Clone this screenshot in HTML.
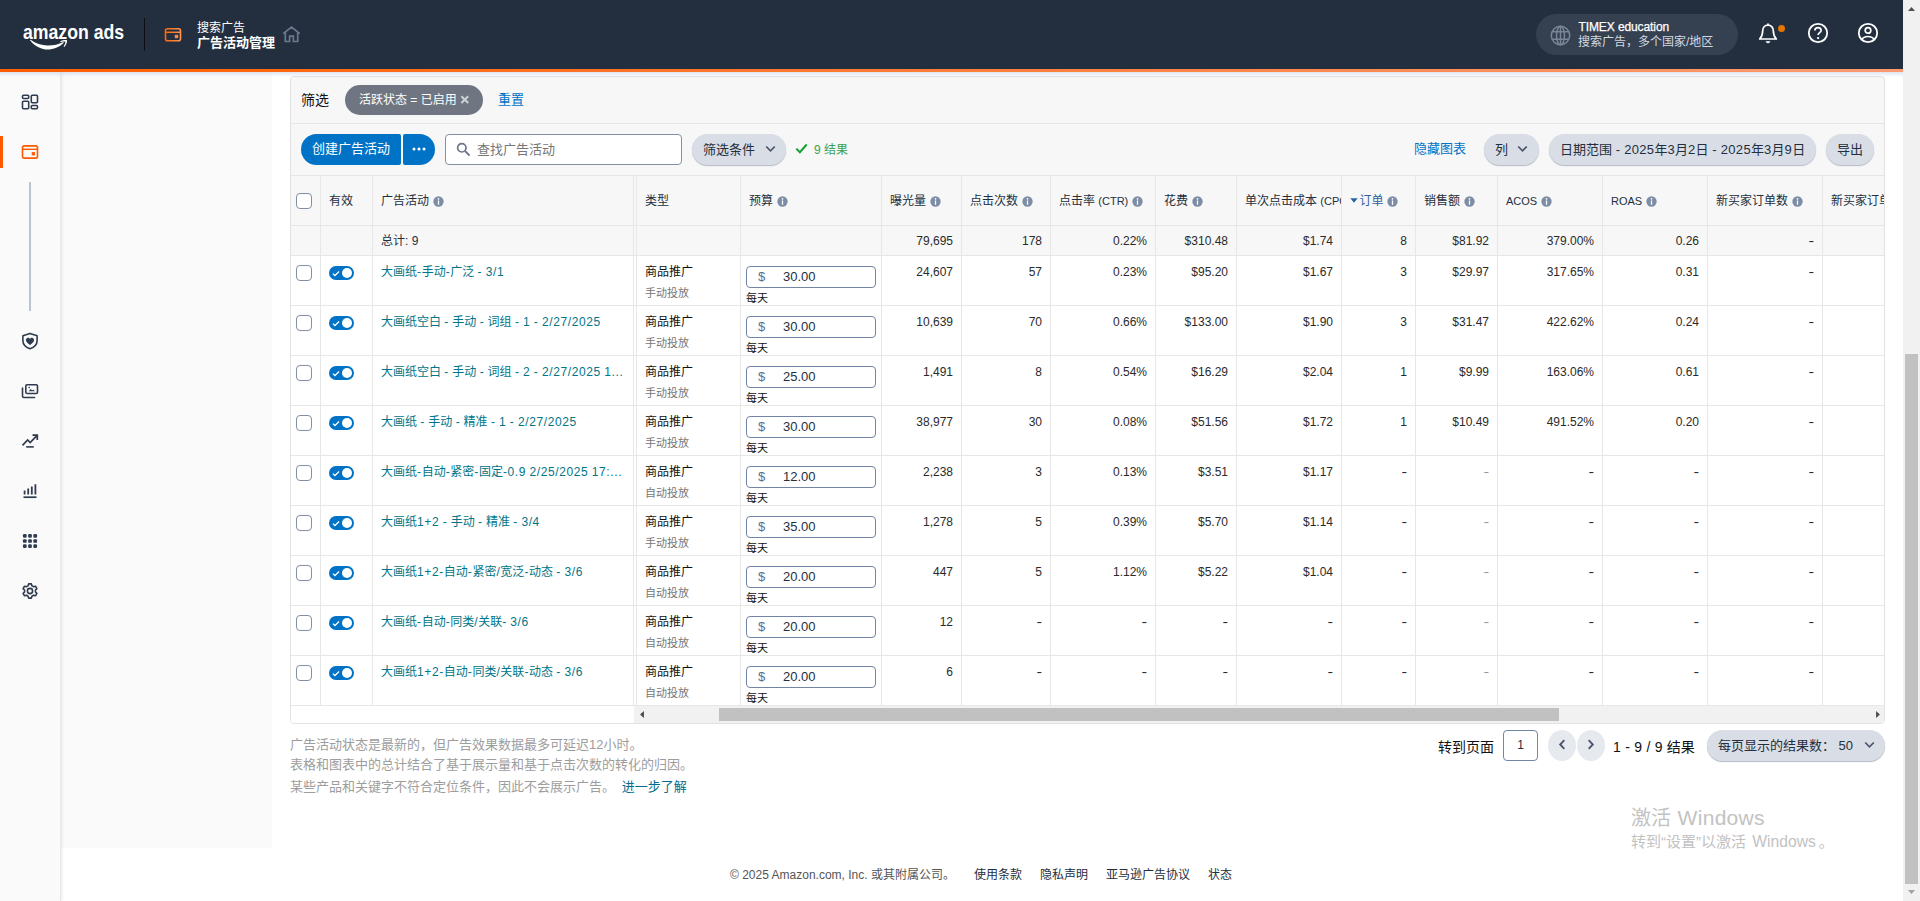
<!DOCTYPE html>
<html lang="zh-CN"><head><meta charset="utf-8"><title>广告活动管理</title>
<style>
*{box-sizing:border-box}
html,body{margin:0;padding:0}
body{width:1920px;height:901px;overflow:hidden;background:#fff;position:relative;
 font-family:"Liberation Sans","Noto Sans CJK SC",sans-serif;font-size:12px;color:#232f3e;line-height:16px}
a{text-decoration:none;color:inherit}
.abs{position:absolute}
svg{display:block}

/* ---------- header ---------- */
#hdr{position:absolute;left:0;top:0;width:1903px;height:72px;background:#232f3e}
#oline{position:absolute;left:0;top:69px;width:1903px;height:3px;background:linear-gradient(90deg,#ff5f00,#ff9b70)}
#hshadow{position:absolute;left:0;top:72px;width:1903px;height:5px;background:linear-gradient(rgba(190,205,222,.5),rgba(190,205,222,0));z-index:5}
#logo{position:absolute;left:22.500px;top:19px;color:#fff;font-weight:bold;font-size:20.500px;line-height:26px;white-space:nowrap;transform:scaleX(.862);transform-origin:0 0;letter-spacing:0}
#smile{position:absolute;left:24px;top:34px}
#hdiv{position:absolute;left:144px;top:18px;width:1px;height:33px;background:#0b0f14}
#hicon{position:absolute;left:164px;top:27px}
#ht1{position:absolute;left:197px;top:20px;color:#fff;font-size:12px;line-height:16px;white-space:nowrap}
#ht2{position:absolute;left:197px;top:35px;color:#fff;font-size:13px;line-height:16px;font-weight:bold;white-space:nowrap}
#home{position:absolute;left:282px;top:25px}
#acct{position:absolute;left:1536px;top:14px;width:202px;height:41px;border-radius:21px;background:#354050}
#globe{position:absolute;left:14.300px;top:10.500px}
#ac1{position:absolute;left:42.500px;top:5px;color:#fff;-webkit-text-stroke:.25px #fff;letter-spacing:-.1px;font-size:12px;line-height:16px;white-space:nowrap}
#ac2{position:absolute;left:42px;top:20px;color:#d3d9e1;font-size:12px;line-height:16px;white-space:nowrap}
#bell{position:absolute;left:1757px;top:23px}
#dot{position:absolute;left:1778px;top:25px;width:7px;height:7px;border-radius:50%;background:#e77600}
#help{position:absolute;left:1807px;top:22px}
#user{position:absolute;left:1857px;top:22px}

/* ---------- page scrollbar ---------- */
#vs{position:absolute;left:1903px;top:0;width:17px;height:901px;background:#f1f1f1}
#vs .thumb{position:absolute;left:2px;top:354px;width:13px;height:530px;background:#c1c1c1}
#vs svg{position:absolute;left:4px}

/* ---------- sidebar ---------- */
#side{position:absolute;left:0;top:72px;width:61px;height:829px;background:#fafafa;border-right:1px solid #e9e9e9;box-shadow:1px 0 3px rgba(0,0,0,.09);z-index:2}
#side .act{position:absolute;left:0;top:64px;width:3px;height:32px;background:#ff5a00}
#side .ln{position:absolute;left:29px;top:110px;width:1.500px;height:129px;background:#bcc4d4}
#side svg{position:absolute;left:21px}
#sub{position:absolute;left:61px;top:72px;width:211px;height:776px;background:#fafafa}

/* ---------- panel ---------- */
#panel{position:absolute;left:290px;top:76px;width:1595px;height:648px;border:1px solid #e2e2e2;border-radius:4px;background:#f7f7f7;overflow:hidden}
#frow{position:absolute;left:0;top:0;width:100%;height:47px;border-bottom:1px solid #e7e7e7}
#trow{position:absolute;left:0;top:47px;width:100%;height:52px;border-bottom:1px solid #e7e7e7}
.pill{position:absolute;height:31px;border-radius:16px;background:#d9dde6;box-shadow:0 1px 1px #b4bac6;color:#232f3e;font-size:13px;line-height:31px;white-space:nowrap}
.chev{position:absolute}
.ls{letter-spacing:.32px}

/* ---------- table ---------- */
#tbl{position:absolute;left:0;top:99px;width:1593px;height:547px;background:#fff}
.thead{position:absolute;left:0;top:0;width:100%;height:50px;border-bottom:1px solid #e7e7e7;background:#f7f7f7}
.th{position:absolute;top:0;height:49px;overflow:hidden;white-space:nowrap;padding-left:9px;line-height:50px;color:#232f3e}
.th .l{font-size:11px}
.th .tx{display:inline-block;vertical-align:top}
.th.sorted .tx{color:#2a62a0}
.info{display:inline-block;width:11px;height:11px;vertical-align:top;margin:19.5px 0 0 4px}
.sort{display:inline-block;width:8px;height:5px;vertical-align:top;margin:21.500px 1.700px 0 -.300px}
.tr{position:absolute;left:0;width:100%;height:50px;border-bottom:1px solid #e7e7e7;background:#fff}
.tr.tot{background:#f7f7f7}
.td{position:absolute;top:0;height:49px;white-space:nowrap;overflow:hidden}
.tot .td{height:29px}
.t1{position:absolute;left:9px;color:#232f3e}
.n{position:absolute;right:8px;top:8px;color:#2a2a2a}
.n.d{transform:scaleX(1.400);transform-origin:100% 50%}
.n.g{color:#9a9a9a}
.cb{position:absolute;width:16px;height:16px;border:1px solid #8290a4;border-radius:4px;background:#fff}
.tg{position:absolute;left:9px;top:10px;width:25px;height:14px;border-radius:7px;background:#0073c7}
.tg i{position:absolute;left:13px;top:2px;width:10px;height:10px;border-radius:50%;background:#fff}
.tg svg{position:absolute;left:3px;top:3.500px;width:8px;height:7px}
.lk{position:absolute;left:9px;top:8px;color:#007587}
.lk .l{letter-spacing:.6px;word-spacing:-.4px}
.ty1{position:absolute;left:9px;top:8px;color:#111}
.ty2{position:absolute;left:9px;top:29px;color:#767676;font-size:11px;line-height:16px}
.bud{position:absolute;left:6px;top:10px;width:130px;height:22px;border:1px solid #7385a4;border-radius:4px;background:#fff}
.bud b{position:absolute;left:11px;top:2px;font-weight:normal;color:#5c6f8f;font-size:13px}
.bud em{position:absolute;left:36px;top:2px;font-style:normal;font-size:13px;color:#232f3e}
.day{position:absolute;left:6px;top:34px;font-size:11px;color:#111}
.vl{position:absolute;top:0;width:1px;height:529px;background:#e7e7e7}
#hs{position:absolute;left:343px;top:530px;width:1250px;height:17px;background:#f1f1f1}
#hs .thumb{position:absolute;left:85px;top:2px;width:840px;height:13px;background:#c1c1c1}
#hs svg{position:absolute;top:5px;width:4px;height:7px}
#hs .al{left:6px}
#hs .ar{right:4px}

/* ---------- bottom ---------- */
.note{position:absolute;left:290px;color:#9d9d9d;font-size:13px;line-height:18px;white-space:nowrap}
.pg{position:absolute;font-size:14px;line-height:18px;color:#111;white-space:nowrap}
.circ{position:absolute;top:730px;width:28px;height:31px;border-radius:50%;background:#e6e9ee}
.wm1{position:absolute;left:1631px;top:804px;font-size:20px;line-height:28px;color:#c2c2c2;white-space:nowrap}
.wm2{position:absolute;left:1631px;top:831px;font-size:15px;line-height:22px;color:#c2c2c2;white-space:nowrap}
.ft{position:absolute;top:867px;font-size:12px;line-height:16px;color:#232f3e;white-space:nowrap}

</style></head>
<body>
<div id="hdr">
<div id="logo">amazon ads</div>
<svg id="smile" width="50" height="20" viewBox="24 34 50 20"><path d="M30 40.2C35 46.600 42 49.600 47.500 49.600c6 0 12-2.500 16.300-6.800l-.7-.7c-4.500 2.500-10 3.600-15.600 3.500-6-.1-12-2.100-16.900-5.800z" fill="#fff"/><path d="M60.200 41.300c2.300-1.100 5.300-1.500 6.800-1 .6 1.700-1 5-2.700 6.600l-.7-.4c1.200-1.700 2.100-3.900 1.700-4.700-1-.6-3.300-.3-4.800.2z" fill="#fff"/></svg>
<div id="hdiv"></div>
<svg id="hicon" width="18" height="15" viewBox="0 0 18 15"><defs><linearGradient id="og" gradientUnits="userSpaceOnUse" x1="0" x2="18" y1="0" y2="0"><stop offset="0" stop-color="#ff6200"/><stop offset="1" stop-color="#ff9a5c"/></linearGradient></defs><rect x="1.500" y="1.800" width="15" height="11.900" rx="2" fill="none" stroke="url(#og)" stroke-width="1.600"/><path d="M1.500 5.300h15" stroke="url(#og)" stroke-width="1.500"/><rect x="10.800" y="7.800" width="3.400" height="3.400" fill="#ff8a45"/></svg>
<div id="ht1">搜索广告</div>
<div id="ht2">广告活动管理</div>
<svg id="home" width="19" height="18" viewBox="0 0 19 18"><path d="M1.200 8.600L9.500 2l8.300 6.600M3.300 7.400v9.100h4.300v-5.300h3.800v5.300h4.300V7.400" fill="none" stroke="#6b788e" stroke-width="1.700" stroke-linejoin="miter"/></svg>
<div id="acct">
<svg id="globe" width="21" height="21" viewBox="0 0 21 21"><g fill="none" stroke="#7a8597" stroke-width="1.500"><circle cx="10.500" cy="10.500" r="9.200"/><ellipse cx="10.500" cy="10.500" rx="4" ry="9.200"/><path d="M10.500 1.300v18.400M2.300 6.700h16.400M2.300 14.300h16.400"/></g></svg>
<div id="ac1">TIMEX education</div>
<div id="ac2">搜索广告，多个国家/地区</div>
</div>
<svg id="bell" width="22" height="22" viewBox="0 0 22 22"><path d="M11 2.200c-3.300 0-5.300 2.500-5.300 5.600 0 4.500-1.300 6.300-3 8.200h16.600c-1.700-1.900-3-3.700-3-8.200 0-3.100-2-5.600-5.300-5.600zM11 2.200V1" fill="none" stroke="#fff" stroke-width="1.700" stroke-linejoin="round" stroke-linecap="round"/><path d="M8.600 18.300c.4 1.300 1.300 2 2.400 2s2-.7 2.400-2z" fill="#fff"/></svg>
<div id="dot"></div>
<svg id="help" width="22" height="22" viewBox="0 0 22 22"><circle cx="11" cy="11" r="9.200" fill="none" stroke="#fff" stroke-width="1.800"/><path d="M7.900 8.600c0-1.800 1.300-2.900 3.100-2.900s3.100 1.100 3.100 2.700c0 2.200-3 2.300-3 4.700" fill="none" stroke="#fff" stroke-width="1.700"/><circle cx="11.100" cy="16.100" r="1.150" fill="#fff"/></svg>
<svg id="user" width="22" height="22" viewBox="0 0 22 22"><circle cx="11" cy="11" r="9.200" fill="none" stroke="#fff" stroke-width="1.800"/><circle cx="11" cy="8.400" r="2.800" fill="none" stroke="#fff" stroke-width="1.700"/><path d="M4.800 17.800c1.200-2.300 3.500-3.300 6.200-3.300s5 1 6.200 3.300" fill="none" stroke="#fff" stroke-width="1.700"/></svg>
</div>
<div id="oline"></div>
<div id="hshadow"></div>
<div id="vs"><svg style="top:7px;left:5px" width="7" height="4" viewBox="0 0 7 4"><path d="M0 4h7L3.500 0z" fill="#505050"/></svg><div class="thumb"></div><svg style="top:890px;left:5px" width="7" height="4" viewBox="0 0 7 4"><path d="M0 0h7L3.500 4z" fill="#a3a3a3"/></svg></div>
<div id="sub"></div>
<div id="side">
<div class="act"></div>
<div class="ln"></div>
<svg style="top:21px" width="18" height="18" viewBox="0 0 18 18"><g fill="none" stroke="#2f3b4e" stroke-width="1.600"><rect x="1.500" y="2.200" width="6.200" height="3.300" rx="1"/><rect x="10.300" y="2.200" width="6.200" height="7.600" rx="1"/><rect x="1.500" y="8.200" width="6.200" height="7.600" rx="1"/><rect x="10.300" y="12.500" width="6.200" height="3.300" rx="1"/></g></svg>
<svg style="top:71px" width="18" height="18" viewBox="0 0 18 18"><rect x="1.500" y="2.900" width="15" height="12.200" rx="1.800" fill="none" stroke="#ff5a00" stroke-width="1.600"/><path d="M1.500 6.300h15" stroke="#ff5a00" stroke-width="1.400"/><rect x="10.700" y="9.100" width="3.300" height="3.300" fill="#ff5a00"/></svg>
<svg style="top:260px" width="18" height="18" viewBox="0 0 18 18"><path d="M9 1.400l7.100 2.400v5c0 3.800-3 6.500-7.100 8-4.100-1.500-7.100-4.200-7.100-8v-5z" fill="none" stroke="#2f3b4e" stroke-width="1.600" stroke-linejoin="round"/><path d="M9 13C6.600 11.200 4.900 9.900 4.900 8.100c0-1.300 1-2.300 2.200-2.300.8 0 1.500.5 1.900 1.100.4-.6 1.100-1.100 1.900-1.100 1.200 0 2.200 1 2.200 2.300 0 1.800-1.700 3.100-4.100 4.900z" fill="#2f3b4e"/></svg>
<svg style="top:310px" width="18" height="18" viewBox="0 0 18 18"><rect x="4.800" y="2.700" width="11.700" height="8.800" rx="1.300" fill="none" stroke="#2f3b4e" stroke-width="1.600"/><path d="M1.500 6v8.100c0 .8.600 1.400 1.400 1.400h10.600" fill="none" stroke="#2f3b4e" stroke-width="1.600" stroke-linecap="round"/><path d="M7.600 9.300l2.200-2.300 1.500 1.500.9-.9 1.700 1.700z" fill="#2f3b4e"/><circle cx="8.200" cy="5.600" r=".8" fill="#2f3b4e"/></svg>
<svg style="top:360px" width="18" height="18" viewBox="0 0 18 18"><path d="M1.500 13.300L6.600 7.900l2.600 2.600 6.900-7.200M11.500 3.100h4.800v4.800" fill="none" stroke="#2f3b4e" stroke-width="1.700"/><path d="M5.200 14.900h7.600" stroke="#2f3b4e" stroke-width="1.600"/></svg>
<svg style="top:410px" width="18" height="18" viewBox="0 0 18 18"><path d="M3.600 8.500v4M7.200 6.500v6M10.800 4.600v7.900M14.400 2.300v10.200" stroke="#2f3b4e" stroke-width="1.800"/><path d="M2.500 15.200h13" stroke="#2f3b4e" stroke-width="1.700"/></svg>
<svg style="top:460px" width="18" height="18" viewBox="0 0 18 18"><g fill="#2f3b4e"><rect x="1.95" y="2.05" width="3.700" height="3.700" rx="1.200"/><rect x="7.15" y="2.05" width="3.700" height="3.700" rx="1.200"/><rect x="12.35" y="2.05" width="3.700" height="3.700" rx="1.200"/><rect x="1.95" y="7.15" width="3.700" height="3.700" rx="1.200"/><rect x="7.15" y="7.15" width="3.700" height="3.700" rx="1.200"/><rect x="12.35" y="7.15" width="3.700" height="3.700" rx="1.200"/><rect x="1.95" y="12.25" width="3.700" height="3.700" rx="1.200"/><rect x="7.15" y="12.25" width="3.700" height="3.700" rx="1.200"/><rect x="12.35" y="12.25" width="3.700" height="3.700" rx="1.200"/></g></svg>
<svg style="top:510px" width="18" height="18" viewBox="0 0 18 18"><path d="M7.12 3.83L7.61 1.83L10.39 1.83L10.88 3.83A5.50 5.50 0 0 1 12.54 4.79L14.51 4.21L15.90 6.62L14.42 8.04A5.50 5.50 0 0 1 14.42 9.96L15.90 11.38L14.51 13.79L12.54 13.21A5.50 5.50 0 0 1 10.88 14.17L10.39 16.17L7.61 16.17L7.12 14.17A5.50 5.50 0 0 1 5.46 13.21L3.49 13.79L2.10 11.38L3.58 9.96A5.50 5.50 0 0 1 3.58 8.04L2.10 6.62L3.49 4.21L5.46 4.79A5.50 5.50 0 0 1 7.12 3.83z" fill="none" stroke="#2f3b4e" stroke-width="1.600" stroke-linejoin="round"/><circle cx="9" cy="9" r="2.600" fill="none" stroke="#2f3b4e" stroke-width="1.600"/></svg>
</div>
<div id="panel">
<div id="frow">
<div class="abs" style="left:10px;top:14px;font-size:14px;line-height:18px;color:#111">筛选</div>
<div class="abs" style="left:54px;top:8px;width:138px;height:30px;border-radius:15px;background:#6f7681;color:#fff;font-size:12px;line-height:30px;padding-left:14px;white-space:nowrap">活跃状态 = 已启用<svg class="abs" style="left:115px;top:10px" width="10" height="10" viewBox="0 0 10 10"><path d="M1.400 1.200l6.800 6.800M8.200 1.200L1.400 8" stroke="#cdd1d6" stroke-width="2"/></svg></div>
<a class="abs" style="left:207px;top:14px;font-size:13px;line-height:18px;color:#0073c7">重置</a>
</div>
<div id="trow">
<div class="abs" style="left:10px;top:10px;width:100px;height:31px;border-radius:16px 2px 2px 16px;background:#0073c7;color:#fff;font-size:13px;line-height:30px;padding-left:11px;white-space:nowrap">创建广告活动</div>
<div class="abs" style="left:112px;top:10px;width:32px;height:31px;border-radius:2px 16px 16px 2px;background:#0073c7"><svg class="abs" style="left:9px;top:12.500px" width="14" height="4" viewBox="0 0 14 4"><circle cx="2" cy="2" r="1.500" fill="#fff"/><circle cx="7" cy="2" r="1.500" fill="#fff"/><circle cx="12" cy="2" r="1.500" fill="#fff"/></svg></div>
<div class="abs" style="left:154px;top:10px;width:237px;height:31px;border:1px solid #8290a4;border-radius:4px;background:#fff"><svg class="abs" style="left:10px;top:7px" width="15" height="15" viewBox="0 0 15 15"><circle cx="5.800" cy="5.800" r="4.200" fill="none" stroke="#6b7688" stroke-width="1.700"/><path d="M9 9l4.600 4.600" stroke="#6b7688" stroke-width="1.900"/></svg><span class="abs" style="left:31px;top:6px;font-size:13px;line-height:18px;color:#767676;white-space:nowrap">查找广告活动</span></div>
<div class="pill" style="left:401px;top:10px;width:94px;padding-left:11px">筛选条件<svg class="chev" style="left:73px;top:11px" width="11" height="8" viewBox="0 0 11 8"><path d="M1.200 1.500l4.300 4.300 4.300-4.300" fill="none" stroke="#4a5568" stroke-width="1.700"/></svg></div>
<svg class="abs" style="left:504px;top:19px" width="13" height="11" viewBox="0 0 13 11"><path d="M1.300 5.600l3.600 3.600 6.800-7.700" fill="none" stroke="#12a134" stroke-width="2"/></svg>
<div class="abs" style="left:523px;top:18px;font-size:12px;line-height:16px;color:#3ba24f;white-space:nowrap">9 结果</div>
<a class="abs" style="left:1123px;top:16px;font-size:13px;line-height:18px;color:#0073c7;white-space:nowrap">隐藏图表</a>
<div class="pill" style="left:1193px;top:10px;width:55px;padding-left:11px">列<svg class="chev" style="left:33px;top:11px" width="11" height="8" viewBox="0 0 11 8"><path d="M1.200 1.500l4.300 4.300 4.300-4.300" fill="none" stroke="#4a5568" stroke-width="1.700"/></svg></div>
<div class="pill" style="left:1258px;top:10px;width:267px;padding-left:11px">日期范围 <span class="ls">- 2025</span>年<span class="ls">3</span>月<span class="ls">2</span>日 <span class="ls">- 2025</span>年<span class="ls">3</span>月<span class="ls">9</span>日</div>
<div class="pill" style="left:1535px;top:10px;width:48px;padding-left:11px">导出</div>
</div>
<div id="tbl">
<div class="thead">
<div class="th" style="left:0;width:29px"><span class="cb" style="left:5px;top:17px"></span></div>
<div class="th" style="left:29px;width:52px"><span class="tx">有效</span></div>
<div class="th" style="left:81px;width:264px"><span class="tx">广告活动</span><svg class="info" viewBox="0 0 12 12"><circle cx="6" cy="6" r="5.6" fill="#7d8da6"/><rect x="5.300" y="4.900" width="1.400" height="4.600" fill="#fff"/><circle cx="6" cy="3.100" r=".95" fill="#fff"/></svg></div>
<div class="th" style="left:345px;width:104px"><span class="tx">类型</span></div>
<div class="th" style="left:449px;width:141px"><span class="tx">预算</span><svg class="info" viewBox="0 0 12 12"><circle cx="6" cy="6" r="5.6" fill="#7d8da6"/><rect x="5.300" y="4.900" width="1.400" height="4.600" fill="#fff"/><circle cx="6" cy="3.100" r=".95" fill="#fff"/></svg></div>
<div class="th" style="left:590px;width:80px"><span class="tx">曝光量</span><svg class="info" viewBox="0 0 12 12"><circle cx="6" cy="6" r="5.6" fill="#7d8da6"/><rect x="5.300" y="4.900" width="1.400" height="4.600" fill="#fff"/><circle cx="6" cy="3.100" r=".95" fill="#fff"/></svg></div>
<div class="th" style="left:670px;width:89px"><span class="tx">点击次数</span><svg class="info" viewBox="0 0 12 12"><circle cx="6" cy="6" r="5.6" fill="#7d8da6"/><rect x="5.300" y="4.900" width="1.400" height="4.600" fill="#fff"/><circle cx="6" cy="3.100" r=".95" fill="#fff"/></svg></div>
<div class="th" style="left:759px;width:105px"><span class="tx">点击率 <span class="l">(CTR)</span></span><svg class="info" viewBox="0 0 12 12"><circle cx="6" cy="6" r="5.6" fill="#7d8da6"/><rect x="5.300" y="4.900" width="1.400" height="4.600" fill="#fff"/><circle cx="6" cy="3.100" r=".95" fill="#fff"/></svg></div>
<div class="th" style="left:864px;width:81px"><span class="tx">花费</span><svg class="info" viewBox="0 0 12 12"><circle cx="6" cy="6" r="5.6" fill="#7d8da6"/><rect x="5.300" y="4.900" width="1.400" height="4.600" fill="#fff"/><circle cx="6" cy="3.100" r=".95" fill="#fff"/></svg></div>
<div class="th" style="left:945px;width:105px"><span class="tx">单次点击成本 <span class="l">(CPC)</span></span><svg class="info" viewBox="0 0 12 12"><circle cx="6" cy="6" r="5.6" fill="#7d8da6"/><rect x="5.300" y="4.900" width="1.400" height="4.600" fill="#fff"/><circle cx="6" cy="3.100" r=".95" fill="#fff"/></svg></div>
<div class="th sorted" style="left:1050px;width:74px"><span class="tx"><svg class="sort" viewBox="0 0 8 5"><path d="M0.3 0.3h7.4L4 4.8z" fill="#2a62a0"/></svg>订单</span><svg class="info" viewBox="0 0 12 12"><circle cx="6" cy="6" r="5.6" fill="#7d8da6"/><rect x="5.300" y="4.900" width="1.400" height="4.600" fill="#fff"/><circle cx="6" cy="3.100" r=".95" fill="#fff"/></svg></div>
<div class="th" style="left:1124px;width:82px"><span class="tx">销售额</span><svg class="info" viewBox="0 0 12 12"><circle cx="6" cy="6" r="5.6" fill="#7d8da6"/><rect x="5.300" y="4.900" width="1.400" height="4.600" fill="#fff"/><circle cx="6" cy="3.100" r=".95" fill="#fff"/></svg></div>
<div class="th" style="left:1206px;width:105px"><span class="tx"><span class="l">ACOS</span></span><svg class="info" viewBox="0 0 12 12"><circle cx="6" cy="6" r="5.6" fill="#7d8da6"/><rect x="5.300" y="4.900" width="1.400" height="4.600" fill="#fff"/><circle cx="6" cy="3.100" r=".95" fill="#fff"/></svg></div>
<div class="th" style="left:1311px;width:105px"><span class="tx"><span class="l">ROAS</span></span><svg class="info" viewBox="0 0 12 12"><circle cx="6" cy="6" r="5.6" fill="#7d8da6"/><rect x="5.300" y="4.900" width="1.400" height="4.600" fill="#fff"/><circle cx="6" cy="3.100" r=".95" fill="#fff"/></svg></div>
<div class="th" style="left:1416px;width:115px"><span class="tx">新买家订单数</span><svg class="info" viewBox="0 0 12 12"><circle cx="6" cy="6" r="5.6" fill="#7d8da6"/><rect x="5.300" y="4.900" width="1.400" height="4.600" fill="#fff"/><circle cx="6" cy="3.100" r=".95" fill="#fff"/></svg></div>
<div class="th" style="left:1531px;width:62px"><span class="tx">新买家订单数占比</span><svg class="info" viewBox="0 0 12 12"><circle cx="6" cy="6" r="5.6" fill="#7d8da6"/><rect x="5.300" y="4.900" width="1.400" height="4.600" fill="#fff"/><circle cx="6" cy="3.100" r=".95" fill="#fff"/></svg></div>
</div>
<div class="tr tot" style="top:50px;height:30px">
<div class="td" style="left:81px;width:264px"><span class="t1" style="top:7px">总计: 9</span></div>
<div class="td num" style="left:590px;width:80px"><span class="n" style="top:7px">79,695</span></div>
<div class="td num" style="left:670px;width:89px"><span class="n" style="top:7px">178</span></div>
<div class="td num" style="left:759px;width:105px"><span class="n" style="top:7px">0.22%</span></div>
<div class="td num" style="left:864px;width:81px"><span class="n" style="top:7px">$310.48</span></div>
<div class="td num" style="left:945px;width:105px"><span class="n" style="top:7px">$1.74</span></div>
<div class="td num" style="left:1050px;width:74px"><span class="n" style="top:7px">8</span></div>
<div class="td num" style="left:1124px;width:82px"><span class="n" style="top:7px">$81.92</span></div>
<div class="td num" style="left:1206px;width:105px"><span class="n" style="top:7px">379.00%</span></div>
<div class="td num" style="left:1311px;width:105px"><span class="n" style="top:7px">0.26</span></div>
<div class="td num" style="left:1416px;width:115px"><span class="n d" style="top:7px">-</span></div>
</div>
<div class="tr" style="top:80px">
<div class="td" style="left:0;width:29px"><span class="cb" style="left:5px;top:9px"></span></div>
<div class="td" style="left:29px;width:52px"><span class="tg"><svg viewBox="0 0 9 7"><path d="M1 3.6l2.3 2.2L8 1.2" fill="none" stroke="#fff" stroke-width="1.35"/></svg><i></i></span></div>
<div class="td" style="left:81px;width:264px"><a class="lk">大画纸<span class="l">-</span>手动<span class="l">-</span>广泛 <span class="l">- 3/1</span></a></div>
<div class="td" style="left:345px;width:104px"><span class="ty1">商品推广</span><span class="ty2">手动投放</span></div>
<div class="td" style="left:449px;width:141px"><span class="bud"><b>$</b><em>30.00</em></span><span class="day">每天</span></div>
<div class="td num" style="left:590px;width:80px"><span class="n">24,607</span></div>
<div class="td num" style="left:670px;width:89px"><span class="n">57</span></div>
<div class="td num" style="left:759px;width:105px"><span class="n">0.23%</span></div>
<div class="td num" style="left:864px;width:81px"><span class="n">$95.20</span></div>
<div class="td num" style="left:945px;width:105px"><span class="n">$1.67</span></div>
<div class="td num" style="left:1050px;width:74px"><span class="n">3</span></div>
<div class="td num" style="left:1124px;width:82px"><span class="n">$29.97</span></div>
<div class="td num" style="left:1206px;width:105px"><span class="n">317.65%</span></div>
<div class="td num" style="left:1311px;width:105px"><span class="n">0.31</span></div>
<div class="td num" style="left:1416px;width:115px"><span class="n d">-</span></div>
</div>
<div class="tr" style="top:130px">
<div class="td" style="left:0;width:29px"><span class="cb" style="left:5px;top:9px"></span></div>
<div class="td" style="left:29px;width:52px"><span class="tg"><svg viewBox="0 0 9 7"><path d="M1 3.6l2.3 2.2L8 1.2" fill="none" stroke="#fff" stroke-width="1.35"/></svg><i></i></span></div>
<div class="td" style="left:81px;width:264px"><a class="lk">大画纸空白 <span class="l">-</span> 手动 <span class="l">-</span> 词组 <span class="l">- 1 - 2/27/2025</span></a></div>
<div class="td" style="left:345px;width:104px"><span class="ty1">商品推广</span><span class="ty2">手动投放</span></div>
<div class="td" style="left:449px;width:141px"><span class="bud"><b>$</b><em>30.00</em></span><span class="day">每天</span></div>
<div class="td num" style="left:590px;width:80px"><span class="n">10,639</span></div>
<div class="td num" style="left:670px;width:89px"><span class="n">70</span></div>
<div class="td num" style="left:759px;width:105px"><span class="n">0.66%</span></div>
<div class="td num" style="left:864px;width:81px"><span class="n">$133.00</span></div>
<div class="td num" style="left:945px;width:105px"><span class="n">$1.90</span></div>
<div class="td num" style="left:1050px;width:74px"><span class="n">3</span></div>
<div class="td num" style="left:1124px;width:82px"><span class="n">$31.47</span></div>
<div class="td num" style="left:1206px;width:105px"><span class="n">422.62%</span></div>
<div class="td num" style="left:1311px;width:105px"><span class="n">0.24</span></div>
<div class="td num" style="left:1416px;width:115px"><span class="n d">-</span></div>
</div>
<div class="tr" style="top:180px">
<div class="td" style="left:0;width:29px"><span class="cb" style="left:5px;top:9px"></span></div>
<div class="td" style="left:29px;width:52px"><span class="tg"><svg viewBox="0 0 9 7"><path d="M1 3.6l2.3 2.2L8 1.2" fill="none" stroke="#fff" stroke-width="1.35"/></svg><i></i></span></div>
<div class="td" style="left:81px;width:264px"><a class="lk">大画纸空白 <span class="l">-</span> 手动 <span class="l">-</span> 词组 <span class="l">- 2 - 2/27/2025 1...</span></a></div>
<div class="td" style="left:345px;width:104px"><span class="ty1">商品推广</span><span class="ty2">手动投放</span></div>
<div class="td" style="left:449px;width:141px"><span class="bud"><b>$</b><em>25.00</em></span><span class="day">每天</span></div>
<div class="td num" style="left:590px;width:80px"><span class="n">1,491</span></div>
<div class="td num" style="left:670px;width:89px"><span class="n">8</span></div>
<div class="td num" style="left:759px;width:105px"><span class="n">0.54%</span></div>
<div class="td num" style="left:864px;width:81px"><span class="n">$16.29</span></div>
<div class="td num" style="left:945px;width:105px"><span class="n">$2.04</span></div>
<div class="td num" style="left:1050px;width:74px"><span class="n">1</span></div>
<div class="td num" style="left:1124px;width:82px"><span class="n">$9.99</span></div>
<div class="td num" style="left:1206px;width:105px"><span class="n">163.06%</span></div>
<div class="td num" style="left:1311px;width:105px"><span class="n">0.61</span></div>
<div class="td num" style="left:1416px;width:115px"><span class="n d">-</span></div>
</div>
<div class="tr" style="top:230px">
<div class="td" style="left:0;width:29px"><span class="cb" style="left:5px;top:9px"></span></div>
<div class="td" style="left:29px;width:52px"><span class="tg"><svg viewBox="0 0 9 7"><path d="M1 3.6l2.3 2.2L8 1.2" fill="none" stroke="#fff" stroke-width="1.35"/></svg><i></i></span></div>
<div class="td" style="left:81px;width:264px"><a class="lk">大画纸 <span class="l">-</span> 手动 <span class="l">-</span> 精准 <span class="l">- 1 - 2/27/2025</span></a></div>
<div class="td" style="left:345px;width:104px"><span class="ty1">商品推广</span><span class="ty2">手动投放</span></div>
<div class="td" style="left:449px;width:141px"><span class="bud"><b>$</b><em>30.00</em></span><span class="day">每天</span></div>
<div class="td num" style="left:590px;width:80px"><span class="n">38,977</span></div>
<div class="td num" style="left:670px;width:89px"><span class="n">30</span></div>
<div class="td num" style="left:759px;width:105px"><span class="n">0.08%</span></div>
<div class="td num" style="left:864px;width:81px"><span class="n">$51.56</span></div>
<div class="td num" style="left:945px;width:105px"><span class="n">$1.72</span></div>
<div class="td num" style="left:1050px;width:74px"><span class="n">1</span></div>
<div class="td num" style="left:1124px;width:82px"><span class="n">$10.49</span></div>
<div class="td num" style="left:1206px;width:105px"><span class="n">491.52%</span></div>
<div class="td num" style="left:1311px;width:105px"><span class="n">0.20</span></div>
<div class="td num" style="left:1416px;width:115px"><span class="n d">-</span></div>
</div>
<div class="tr" style="top:280px">
<div class="td" style="left:0;width:29px"><span class="cb" style="left:5px;top:9px"></span></div>
<div class="td" style="left:29px;width:52px"><span class="tg"><svg viewBox="0 0 9 7"><path d="M1 3.6l2.3 2.2L8 1.2" fill="none" stroke="#fff" stroke-width="1.35"/></svg><i></i></span></div>
<div class="td" style="left:81px;width:264px"><a class="lk">大画纸<span class="l">-</span>自动<span class="l">-</span>紧密<span class="l">-</span>固定<span class="l">-0.9 2/25/2025 17:...</span></a></div>
<div class="td" style="left:345px;width:104px"><span class="ty1">商品推广</span><span class="ty2">自动投放</span></div>
<div class="td" style="left:449px;width:141px"><span class="bud"><b>$</b><em>12.00</em></span><span class="day">每天</span></div>
<div class="td num" style="left:590px;width:80px"><span class="n">2,238</span></div>
<div class="td num" style="left:670px;width:89px"><span class="n">3</span></div>
<div class="td num" style="left:759px;width:105px"><span class="n">0.13%</span></div>
<div class="td num" style="left:864px;width:81px"><span class="n">$3.51</span></div>
<div class="td num" style="left:945px;width:105px"><span class="n">$1.17</span></div>
<div class="td num" style="left:1050px;width:74px"><span class="n d">-</span></div>
<div class="td num" style="left:1124px;width:82px"><span class="n g d">-</span></div>
<div class="td num" style="left:1206px;width:105px"><span class="n d">-</span></div>
<div class="td num" style="left:1311px;width:105px"><span class="n d">-</span></div>
<div class="td num" style="left:1416px;width:115px"><span class="n d">-</span></div>
</div>
<div class="tr" style="top:330px">
<div class="td" style="left:0;width:29px"><span class="cb" style="left:5px;top:9px"></span></div>
<div class="td" style="left:29px;width:52px"><span class="tg"><svg viewBox="0 0 9 7"><path d="M1 3.6l2.3 2.2L8 1.2" fill="none" stroke="#fff" stroke-width="1.35"/></svg><i></i></span></div>
<div class="td" style="left:81px;width:264px"><a class="lk">大画纸<span class="l">1+2 -</span> 手动 <span class="l">-</span> 精准 <span class="l">- 3/4</span></a></div>
<div class="td" style="left:345px;width:104px"><span class="ty1">商品推广</span><span class="ty2">手动投放</span></div>
<div class="td" style="left:449px;width:141px"><span class="bud"><b>$</b><em>35.00</em></span><span class="day">每天</span></div>
<div class="td num" style="left:590px;width:80px"><span class="n">1,278</span></div>
<div class="td num" style="left:670px;width:89px"><span class="n">5</span></div>
<div class="td num" style="left:759px;width:105px"><span class="n">0.39%</span></div>
<div class="td num" style="left:864px;width:81px"><span class="n">$5.70</span></div>
<div class="td num" style="left:945px;width:105px"><span class="n">$1.14</span></div>
<div class="td num" style="left:1050px;width:74px"><span class="n d">-</span></div>
<div class="td num" style="left:1124px;width:82px"><span class="n g d">-</span></div>
<div class="td num" style="left:1206px;width:105px"><span class="n d">-</span></div>
<div class="td num" style="left:1311px;width:105px"><span class="n d">-</span></div>
<div class="td num" style="left:1416px;width:115px"><span class="n d">-</span></div>
</div>
<div class="tr" style="top:380px">
<div class="td" style="left:0;width:29px"><span class="cb" style="left:5px;top:9px"></span></div>
<div class="td" style="left:29px;width:52px"><span class="tg"><svg viewBox="0 0 9 7"><path d="M1 3.6l2.3 2.2L8 1.2" fill="none" stroke="#fff" stroke-width="1.35"/></svg><i></i></span></div>
<div class="td" style="left:81px;width:264px"><a class="lk">大画纸<span class="l">1+2-</span>自动<span class="l">-</span>紧密<span class="l">/</span>宽泛<span class="l">-</span>动态 <span class="l">- 3/6</span></a></div>
<div class="td" style="left:345px;width:104px"><span class="ty1">商品推广</span><span class="ty2">自动投放</span></div>
<div class="td" style="left:449px;width:141px"><span class="bud"><b>$</b><em>20.00</em></span><span class="day">每天</span></div>
<div class="td num" style="left:590px;width:80px"><span class="n">447</span></div>
<div class="td num" style="left:670px;width:89px"><span class="n">5</span></div>
<div class="td num" style="left:759px;width:105px"><span class="n">1.12%</span></div>
<div class="td num" style="left:864px;width:81px"><span class="n">$5.22</span></div>
<div class="td num" style="left:945px;width:105px"><span class="n">$1.04</span></div>
<div class="td num" style="left:1050px;width:74px"><span class="n d">-</span></div>
<div class="td num" style="left:1124px;width:82px"><span class="n g d">-</span></div>
<div class="td num" style="left:1206px;width:105px"><span class="n d">-</span></div>
<div class="td num" style="left:1311px;width:105px"><span class="n d">-</span></div>
<div class="td num" style="left:1416px;width:115px"><span class="n d">-</span></div>
</div>
<div class="tr" style="top:430px">
<div class="td" style="left:0;width:29px"><span class="cb" style="left:5px;top:9px"></span></div>
<div class="td" style="left:29px;width:52px"><span class="tg"><svg viewBox="0 0 9 7"><path d="M1 3.6l2.3 2.2L8 1.2" fill="none" stroke="#fff" stroke-width="1.35"/></svg><i></i></span></div>
<div class="td" style="left:81px;width:264px"><a class="lk">大画纸<span class="l">-</span>自动<span class="l">-</span>同类<span class="l">/</span>关联<span class="l">- 3/6</span></a></div>
<div class="td" style="left:345px;width:104px"><span class="ty1">商品推广</span><span class="ty2">自动投放</span></div>
<div class="td" style="left:449px;width:141px"><span class="bud"><b>$</b><em>20.00</em></span><span class="day">每天</span></div>
<div class="td num" style="left:590px;width:80px"><span class="n">12</span></div>
<div class="td num" style="left:670px;width:89px"><span class="n d">-</span></div>
<div class="td num" style="left:759px;width:105px"><span class="n d">-</span></div>
<div class="td num" style="left:864px;width:81px"><span class="n d">-</span></div>
<div class="td num" style="left:945px;width:105px"><span class="n d">-</span></div>
<div class="td num" style="left:1050px;width:74px"><span class="n d">-</span></div>
<div class="td num" style="left:1124px;width:82px"><span class="n g d">-</span></div>
<div class="td num" style="left:1206px;width:105px"><span class="n d">-</span></div>
<div class="td num" style="left:1311px;width:105px"><span class="n d">-</span></div>
<div class="td num" style="left:1416px;width:115px"><span class="n d">-</span></div>
</div>
<div class="tr" style="top:480px">
<div class="td" style="left:0;width:29px"><span class="cb" style="left:5px;top:9px"></span></div>
<div class="td" style="left:29px;width:52px"><span class="tg"><svg viewBox="0 0 9 7"><path d="M1 3.6l2.3 2.2L8 1.2" fill="none" stroke="#fff" stroke-width="1.35"/></svg><i></i></span></div>
<div class="td" style="left:81px;width:264px"><a class="lk">大画纸<span class="l">1+2-</span>自动<span class="l">-</span>同类<span class="l">/</span>关联<span class="l">-</span>动态 <span class="l">- 3/6</span></a></div>
<div class="td" style="left:345px;width:104px"><span class="ty1">商品推广</span><span class="ty2">自动投放</span></div>
<div class="td" style="left:449px;width:141px"><span class="bud"><b>$</b><em>20.00</em></span><span class="day">每天</span></div>
<div class="td num" style="left:590px;width:80px"><span class="n">6</span></div>
<div class="td num" style="left:670px;width:89px"><span class="n d">-</span></div>
<div class="td num" style="left:759px;width:105px"><span class="n d">-</span></div>
<div class="td num" style="left:864px;width:81px"><span class="n d">-</span></div>
<div class="td num" style="left:945px;width:105px"><span class="n d">-</span></div>
<div class="td num" style="left:1050px;width:74px"><span class="n d">-</span></div>
<div class="td num" style="left:1124px;width:82px"><span class="n g d">-</span></div>
<div class="td num" style="left:1206px;width:105px"><span class="n d">-</span></div>
<div class="td num" style="left:1311px;width:105px"><span class="n d">-</span></div>
<div class="td num" style="left:1416px;width:115px"><span class="n d">-</span></div>
</div>
<div class="vl" style="left:29px"></div>
<div class="vl" style="left:81px"></div>
<div class="vl" style="left:342px"></div>
<div class="vl" style="left:345px"></div>
<div class="vl" style="left:449px"></div>
<div class="vl" style="left:590px"></div>
<div class="vl" style="left:670px"></div>
<div class="vl" style="left:759px"></div>
<div class="vl" style="left:864px"></div>
<div class="vl" style="left:945px"></div>
<div class="vl" style="left:1050px"></div>
<div class="vl" style="left:1124px"></div>
<div class="vl" style="left:1206px"></div>
<div class="vl" style="left:1311px"></div>
<div class="vl" style="left:1416px"></div>
<div class="vl" style="left:1531px"></div>
<div id="hs"><svg class="al" viewBox="0 0 5 9"><path d="M5 0v9L0 4.5z" fill="#4d4d4d"/></svg><div class="thumb"></div><svg class="ar" viewBox="0 0 5 9"><path d="M0 0v9l5-4.5z" fill="#4d4d4d"/></svg></div>
</div>
</div>
<div class="note" style="top:736px">广告活动状态是最新的，但广告效果数据最多可延迟12小时。</div>
<div class="note" style="top:756px">表格和图表中的总计结合了基于展示量和基于点击次数的转化的归因。</div>
<div class="note" style="top:778px">某些产品和关键字不符合定位条件，因此不会展示广告。 <a style="color:#006c8c;margin-left:3px">进一步了解</a></div>
<div class="pg" style="left:1438px;top:738px">转到页面</div>
<div class="abs" style="left:1503px;top:730px;width:35px;height:31px;border:1px solid #7385a4;border-radius:4px;background:#fff;font-size:12px;line-height:29px;text-align:center;color:#232f3e">1</div>
<div class="circ" style="left:1548px"><svg class="abs" style="left:10px;top:8.500px" width="8" height="11" viewBox="0 0 8 11"><path d="M6.300 1.200L2.200 5.500l4.100 4.300" fill="none" stroke="#4a5670" stroke-width="1.900"/></svg></div>
<div class="circ" style="left:1576.500px"><svg class="abs" style="left:10px;top:8.500px" width="8" height="11" viewBox="0 0 8 11"><path d="M1.700 1.200L5.800 5.500 1.700 9.800" fill="none" stroke="#4a5670" stroke-width="1.900"/></svg></div>
<div class="pg" style="left:1613px;top:738px"><span style="letter-spacing:.25px">1 - 9 / 9 </span>结果</div>
<div class="pill" style="left:1707px;top:730px;width:178px;padding-left:11px">每页显示的结果数： 50<svg class="chev" style="left:157px;top:11px" width="11" height="8" viewBox="0 0 11 8"><path d="M1.200 1.500l4.300 4.300 4.300-4.300" fill="none" stroke="#4a5568" stroke-width="1.700"/></svg></div>
<div class="wm1">激活 <span style="font-size:21px;margin-left:1px;letter-spacing:.3px">Windows</span></div>
<div class="wm2">转到“设置”以激活 <span style="font-size:15.700px;margin:0 3px 0 2px">Windows</span>。</div>
<div class="ft" style="left:730px;color:#555">© 2025 Amazon.com, Inc. 或其附属公司。</div>
<a class="ft" style="left:974px">使用条款</a>
<a class="ft" style="left:1040px">隐私声明</a>
<a class="ft" style="left:1106px">亚马逊广告协议</a>
<a class="ft" style="left:1208px">状态</a>
</body></html>
